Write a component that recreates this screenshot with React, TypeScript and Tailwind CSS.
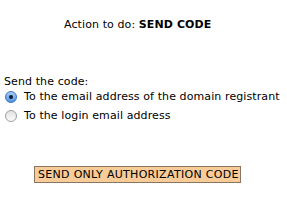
export default function App() {
  return (
    <div className="w-[287px] h-[211px] bg-white text-black text-[11px] leading-[13px] tracking-[0.1px] font-['DejaVu_Sans',Verdana,sans-serif] overflow-hidden">
      <div className="pt-[18px] pl-[64px]">
        Action to do: <span className="font-bold">SEND CODE</span>
      </div>
      <div className="mt-[44px] pl-[4px]">Send the code:</div>
      <div className="mt-[2px] flex flex-col gap-[6px] pl-[5px]">
        <label className="flex items-center gap-[7px] h-[13px]">
          <span className="w-[12px] h-[12px] rounded-full border border-[#3a72c4] bg-gradient-to-b from-[#a9cdf5] to-[#4f93e0] flex items-center justify-center">
            <span className="w-[4px] h-[4px] rounded-full bg-[#0d1b33]" />
          </span>
          To the email address of the domain registrant
        </label>
        <label className="flex items-center gap-[7px] h-[13px]">
          <span className="w-[12px] h-[12px] rounded-full border border-[#9c9c9c] bg-gradient-to-b from-[#e2e2e2] to-[#fbfbfb]" />
          To the login email address
        </label>
      </div>
      <div className="mt-[44px] pl-[34px]">
        <button className="h-[17px] w-[207px] px-[3px] bg-[#f8cc98] border border-[#8a7560] text-black text-[11px] leading-[15px] tracking-[0.3px] font-['DejaVu_Sans',Verdana,sans-serif] text-left whitespace-nowrap">
          SEND ONLY AUTHORIZATION CODE
        </button>
      </div>
    </div>
  );
}
